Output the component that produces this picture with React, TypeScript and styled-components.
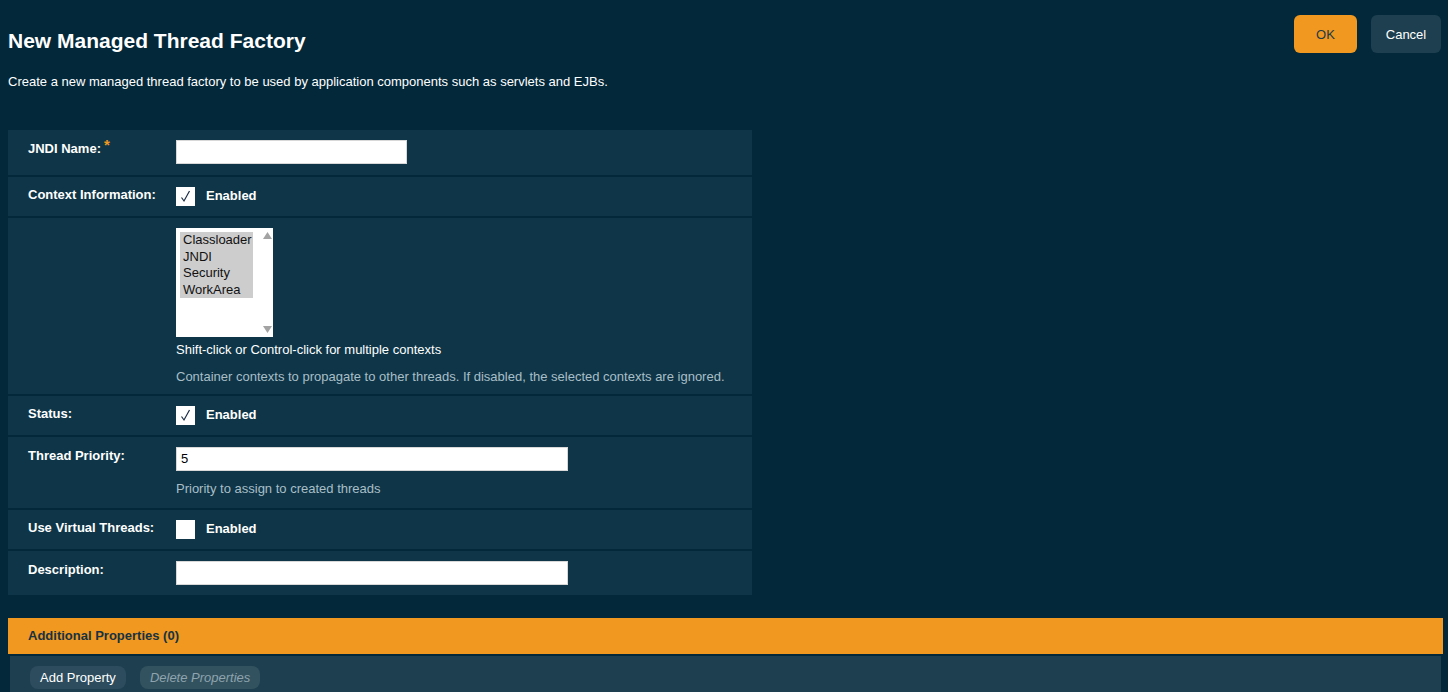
import React from "react";
import styled, { createGlobalStyle } from "styled-components";

const Global = createGlobalStyle`
  html, body { margin: 0; padding: 0; background: #02283a; }
  body { font-family: "Liberation Sans", Arial, sans-serif; color: #fff; }
  * { box-sizing: border-box; }
`;

const Page = styled.div`
  padding: 0 5px 0 8px;
  height: 692px;
  overflow: hidden;
`;

const Header = styled.div`
  display: flex;
  justify-content: space-between;
  align-items: flex-start;
`;

const TitleBlock = styled.div`
  padding-top: 29px;
`;

const Title = styled.h1`
  margin: 0;
  font-size: 21px;
  line-height: 24px;
  font-weight: bold;
  color: #fff;
`;

const Intro = styled.p`
  margin: 21px 0 0;
  font-size: 13px;
  line-height: 15px;
  color: #fff;
`;

const ButtonBar = styled.div`
  display: flex;
  gap: 14px;
  padding-top: 15px;
  margin-right: 2px;
`;

const TopButton = styled.button<{ $primary?: boolean }>`
  height: 38px;
  width: ${(p) => (p.$primary ? "63px" : "70px")};
  padding: 0;
  border: none;
  border-radius: 6px;
  font-family: "Liberation Sans", Arial, sans-serif;
  font-size: 13px;
  background: ${(p) => (p.$primary ? "#f0981f" : "#1e3f4f")};
  color: ${(p) => (p.$primary ? "#1d3a49" : "#fff")};
`;

const Form = styled.div`
  margin-top: 41px;
  width: 744px;
  display: flex;
  flex-direction: column;
  gap: 2px;
`;

const Row = styled.div<{ $h: number }>`
  display: grid;
  grid-template-columns: 148px 1fr;
  background: #0e3648;
  height: ${(p) => p.$h}px;
  padding: 10px 20px 0;
`;

const Label = styled.div<{ $top?: number }>`
  font-size: 13px;
  font-weight: bold;
  line-height: 15px;
  padding-top: ${(p) => p.$top ?? 2}px;
  color: #fff;
  white-space: nowrap;
`;

const Star = styled.span`
  color: #f0981f;
  font-size: 15px;
  vertical-align: top;
  position: relative;
  top: -4px;
  margin-left: 3px;
`;

const Field = styled.div`
  display: flex;
  flex-direction: column;
  align-items: flex-start;
`;

const TextInput = styled.div<{ $w: number }>`
  width: ${(p) => p.$w}px;
  height: 24px;
  background: #fff;
  border: 1px solid #d8d8d8;
  color: #000;
  font-size: 13px;
  line-height: 22px;
  padding-left: 4px;
`;

const CheckLine = styled.div`
  display: flex;
  align-items: center;
  gap: 11px;
  height: 19px;
`;

const Box = styled.div`
  width: 19px;
  height: 19px;
  background: #fff;
  display: flex;
  align-items: center;
  justify-content: center;
`;

const CheckText = styled.span`
  font-size: 13px;
  font-weight: bold;
  color: #fff;
  position: relative;
  top: -1px;
`;

const ListBox = styled.div`
  width: 97px;
  height: 109px;
  background: #fff;
  display: flex;
  padding: 4px 0 0 4px;
`;

const Options = styled.div`
  width: 73px;
  align-self: flex-start;
`;

const Option = styled.div`
  background: #cdcdcd;
  color: #111;
  font-size: 13px;
  line-height: 16.5px;
  padding-left: 3px;
  white-space: nowrap;
`;

const Scroll = styled.div`
  flex: 1;
  display: flex;
  flex-direction: column;
  justify-content: space-between;
  align-items: center;
  padding: 0 0 4px 8px;
`;

const HelpStrong = styled.div`
  font-size: 13px;
  line-height: 15px;
  margin-top: 5px;
  color: #fff;
`;

const Hint = styled.div<{ $mt: number }>`
  font-size: 13px;
  line-height: 15px;
  margin-top: ${(p) => p.$mt}px;
  color: #a9bec7;
`;

const Section = styled.div`
  margin-top: 23px;
`;

const SectionBar = styled.div`
  height: 36px;
  background: #f0981f;
  color: #163243;
  font-size: 13px;
  font-weight: bold;
  line-height: 36px;
  padding-left: 20px;
`;

const SectionBody = styled.div`
  margin: 2px 2px 0;
  height: 60px;
  background: #1e3f50;
  display: flex;
  align-items: flex-start;
  gap: 14px;
  padding: 10px 0 0 20px;
`;

const SmallButton = styled.button<{ $disabled?: boolean }>`
  height: 23px;
  border: none;
  border-radius: 8px;
  padding: 0 10px;
  font-family: "Liberation Sans", Arial, sans-serif;
  font-size: 13px;
  background: ${(p) => (p.$disabled ? "#33525f" : "#2d4d5e")};
  color: ${(p) => (p.$disabled ? "#8ea4ae" : "#fff")};
  font-style: ${(p) => (p.$disabled ? "italic" : "normal")};
`;

const Check = () => (
  <svg width="13" height="13" viewBox="0 0 13 13">
    <path d="M2.5 7.5 L5 11 L10.5 1" fill="none" stroke="#1a2b44" strokeWidth="1.2" />
  </svg>
);

const Tri = ({ up }: { up?: boolean }) => (
  <svg width="9" height="7" viewBox="0 0 9 7">
    <path d={up ? "M0 7 L4.5 0 L9 7 Z" : "M0 0 L4.5 7 L9 0 Z"} fill="#a3a3a3" />
  </svg>
);

const CheckField = ({ on }: { on: boolean }) => (
  <CheckLine>
    <Box>{on && <Check />}</Box>
    <CheckText>Enabled</CheckText>
  </CheckLine>
);

export default function App() {
  return (
    <Page>
      <Global />
      <Header>
        <TitleBlock>
          <Title>New Managed Thread Factory</Title>
          <Intro>
            Create a new managed thread factory to be used by application components such as servlets and EJBs.
          </Intro>
        </TitleBlock>
        <ButtonBar>
          <TopButton $primary>OK</TopButton>
          <TopButton>Cancel</TopButton>
        </ButtonBar>
      </Header>

      <Form>
        <Row $h={45}>
          <Label $top={1}>
            JNDI Name:<Star>*</Star>
          </Label>
          <Field>
            <TextInput $w={231} />
          </Field>
        </Row>
        <Row $h={39}>
          <Label $top={0}>Context Information:</Label>
          <Field>
            <CheckField on />
          </Field>
        </Row>
        <Row $h={176}>
          <Label />
          <Field>
            <ListBox>
              <Options>
                <Option>Classloader</Option>
                <Option>JNDI</Option>
                <Option>Security</Option>
                <Option>WorkArea</Option>
              </Options>
              <Scroll>
                <Tri up />
                <Tri />
              </Scroll>
            </ListBox>
            <HelpStrong>Shift-click or Control-click for multiple contexts</HelpStrong>
            <Hint $mt={12}>
              Container contexts to propagate to other threads. If disabled, the selected contexts are ignored.
            </Hint>
          </Field>
        </Row>
        <Row $h={39}>
          <Label $top={0}>Status:</Label>
          <Field>
            <CheckField on />
          </Field>
        </Row>
        <Row $h={71}>
          <Label $top={1}>Thread Priority:</Label>
          <Field>
            <TextInput $w={392}>5</TextInput>
            <Hint $mt={10}>Priority to assign to created threads</Hint>
          </Field>
        </Row>
        <Row $h={39}>
          <Label $top={0}>Use Virtual Threads:</Label>
          <Field>
            <CheckField on={false} />
          </Field>
        </Row>
        <Row $h={44}>
          <Label $top={1}>Description:</Label>
          <Field>
            <TextInput $w={392} />
          </Field>
        </Row>
      </Form>

      <Section>
        <SectionBar>Additional Properties (0)</SectionBar>
        <SectionBody>
          <SmallButton>Add Property</SmallButton>
          <SmallButton $disabled>Delete Properties</SmallButton>
        </SectionBody>
      </Section>
    </Page>
  );
}
